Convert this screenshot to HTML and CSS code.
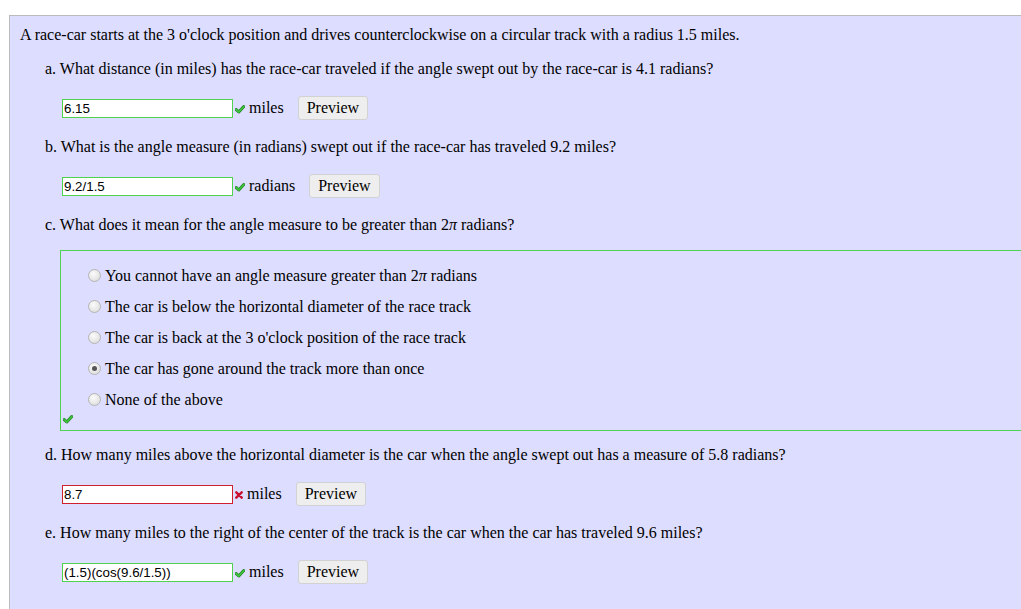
FILE: index.html
```html
<!DOCTYPE html>
<html lang="en">
<head>
  <meta charset="UTF-8" />
  <title>Race-car problem</title>
  <link rel="stylesheet" href="styles.css">
</head>
<body>
<div class="problem">
  <p class="intro">A race-car starts at the 3 o'clock position and drives counterclockwise on a circular track with a radius 1.5 miles.</p>

  <p class="q">a. What distance (in miles) has the race-car traveled if the angle swept out by the race-car is 4.1 radians?</p>
  <div class="answer">
    <input class="correct" type="text" value="6.15" />
    <svg class="mark" width="10" height="9" viewBox="0 0 10 9"><path d="M1.2 4.6 L3.8 7 L8.8 1.6" fill="none" stroke="#1f7a1f" stroke-width="3" stroke-linecap="round" stroke-linejoin="round"/><path d="M1.2 4.6 L3.8 7 L8.8 1.6" fill="none" stroke="#3ec43e" stroke-width="1.8" stroke-linecap="round" stroke-linejoin="round"/></svg>
    <span class="unit">miles</span>
    <button>Preview</button>
  </div>

  <p class="q">b. What is the angle measure (in radians) swept out if the race-car has traveled 9.2 miles?</p>
  <div class="answer">
    <input class="correct" type="text" value="9.2/1.5" />
    <svg class="mark" width="10" height="9" viewBox="0 0 10 9"><path d="M1.2 4.6 L3.8 7 L8.8 1.6" fill="none" stroke="#1f7a1f" stroke-width="3" stroke-linecap="round" stroke-linejoin="round"/><path d="M1.2 4.6 L3.8 7 L8.8 1.6" fill="none" stroke="#3ec43e" stroke-width="1.8" stroke-linecap="round" stroke-linejoin="round"/></svg>
    <span class="unit">radians</span>
    <button>Preview</button>
  </div>

  <p class="q">c. What does it mean for the angle measure to be greater than 2<i>π</i> radians?</p>
  <div class="choices">
    <label class="choice"><span class="radio"></span><span>You cannot have an angle measure greater than 2<i>π</i> radians</span></label>
    <label class="choice"><span class="radio"></span><span>The car is below the horizontal diameter of the race track</span></label>
    <label class="choice"><span class="radio"></span><span>The car is back at the 3 o'clock position of the race track</span></label>
    <label class="choice"><span class="radio checked"></span><span>The car has gone around the track more than once</span></label>
    <label class="choice"><span class="radio"></span><span>None of the above</span></label>
    <div class="choice-mark">
      <svg width="10" height="9" viewBox="0 0 10 9"><path d="M1.2 4.6 L3.8 7 L8.8 1.6" fill="none" stroke="#1f7a1f" stroke-width="3" stroke-linecap="round" stroke-linejoin="round"/><path d="M1.2 4.6 L3.8 7 L8.8 1.6" fill="none" stroke="#3ec43e" stroke-width="1.8" stroke-linecap="round" stroke-linejoin="round"/></svg>
    </div>
  </div>

  <p class="q">d. How many miles above the horizontal diameter is the car when the angle swept out has a measure of 5.8 radians?</p>
  <div class="answer">
    <input class="wrong" type="text" value="8.7" />
    <svg class="mark" width="8" height="8" viewBox="0 0 8 8"><path d="M1.3 1.3 L6.7 6.7 M6.7 1.3 L1.3 6.7" fill="none" stroke="#c8102e" stroke-width="2.4" stroke-linecap="round"/></svg>
    <span class="unit">miles</span>
    <button>Preview</button>
  </div>

  <p class="q">e. How many miles to the right of the center of the track is the car when the car has traveled 9.6 miles?</p>
  <div class="answer">
    <input class="correct" type="text" value="(1.5)(cos(9.6/1.5))" />
    <svg class="mark" width="10" height="9" viewBox="0 0 10 9"><path d="M1.2 4.6 L3.8 7 L8.8 1.6" fill="none" stroke="#1f7a1f" stroke-width="3" stroke-linecap="round" stroke-linejoin="round"/><path d="M1.2 4.6 L3.8 7 L8.8 1.6" fill="none" stroke="#3ec43e" stroke-width="1.8" stroke-linecap="round" stroke-linejoin="round"/></svg>
    <span class="unit">miles</span>
    <button>Preview</button>
  </div>
</div>
</body>
</html>
```

FILE: styles.css
```css
body {
  margin: 0;
  padding: 15px 0 0 9px;
  background: #fff;
  font-family: "Liberation Serif", "Times New Roman", serif;
  font-size: 16px;
  color: #000;
  overflow: hidden;
}
.problem {
  background: #ddf;
  border-top: 1px solid #bbb;
  border-left: 1px solid #bbb;
  padding: 7px 0 40px 10px;
}
p {
  margin: 0;
  line-height: 24px;
}
.intro {
  margin-bottom: 10px;
}
.q {
  padding-left: 25px;
}
.answer {
  display: flex;
  align-items: center;
  height: 24px;
  margin: 15px 0;
  padding-left: 42px;
}
input {
  box-sizing: border-box;
  width: 171px;
  height: 19px;
  padding: 0 1px;
  border: 1px solid #888;
  background: #fff;
  font-family: "Liberation Sans", Arial, sans-serif;
  font-size: 13.33px;
  color: #000;
  outline: none;
}
input.correct {
  border-color: #4fd24f;
}
input.wrong {
  border-color: #d0202e;
}
.mark {
  margin: 2px 4px 0 2px;
}
.unit {
  margin-right: 14px;
}
button {
  box-sizing: border-box;
  height: 24px;
  padding: 0 8px;
  border: 1px solid #d2d2d2;
  border-radius: 3px;
  background: #eee;
  font-family: "Liberation Serif", "Times New Roman", serif;
  font-size: 16px;
  color: #000;
}
.choices {
  margin: 13px 0 12px 40px;
  padding: 9px 0 0 27px;
  border: 1px solid #4fd24f;
  border-right: none;
}
.choice {
  display: flex;
  align-items: center;
  height: 31px;
}
.radio {
  box-sizing: border-box;
  width: 13px;
  height: 13px;
  margin-right: 4px;
  border: 1px solid #b4b4b4;
  border-radius: 50%;
  background: radial-gradient(circle at 40% 35%, #fbfbfb, #d8d8d8);
  position: relative;
}
.radio.checked::after {
  content: "";
  position: absolute;
  left: 3px;
  top: 3px;
  width: 5px;
  height: 5px;
  border-radius: 50%;
  background: #555;
}
.choice-mark {
  height: 15px;
  margin-left: -25px;
}
.choice-mark svg {
  display: block;
}
```
